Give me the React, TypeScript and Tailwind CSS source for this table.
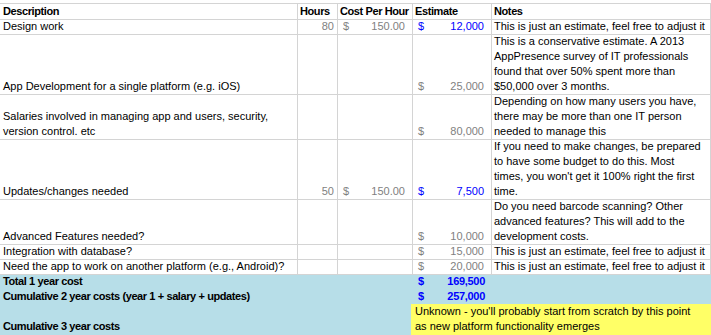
import React from "react";

type Money = { v: string; blue?: boolean; bold?: boolean };

interface Row {
  h: number;
  desc: string[];
  hours?: string;
  rate?: string;
  est?: Money;
  notes: string[];
}

const ROWS: Row[] = [
  {
    h: 15,
    desc: ["Design work"],
    hours: "80",
    rate: "150.00",
    est: { v: "12,000", blue: true },
    notes: ["This is just an estimate, feel free to adjust it"],
  },
  {
    h: 60,
    desc: ["App Development for a single platform (e.g. iOS)"],
    est: { v: "25,000" },
    notes: [
      "This is a conservative estimate. A 2013",
      "AppPresence survey of IT professionals",
      "found that over 50% spent more than",
      "$50,000 over 3 months.",
    ],
  },
  {
    h: 45,
    desc: ["Salaries involved in managing app and users, security,", "version control. etc"],
    est: { v: "80,000" },
    notes: [
      "Depending on how many users you have,",
      "there may be more than one IT person",
      "needed to manage this",
    ],
  },
  {
    h: 60,
    desc: ["Updates/changes needed"],
    hours: "50",
    rate: "150.00",
    est: { v: "7,500", blue: true },
    notes: [
      "If you need to make changes, be prepared",
      "to have some budget to do this. Most",
      "times, you won't get it 100% right the first",
      "time.",
    ],
  },
  {
    h: 45,
    desc: ["Advanced Features needed?"],
    est: { v: "10,000" },
    notes: [
      "Do you need barcode scanning? Other",
      "advanced features? This will add to the",
      "development costs.",
    ],
  },
  {
    h: 15,
    desc: ["Integration with database?"],
    est: { v: "15,000" },
    notes: ["This is just an estimate, feel free to adjust it"],
  },
  {
    h: 15,
    desc: ["Need the app to work on another platform (e.g., Android)?"],
    est: { v: "20,000" },
    notes: ["This is just an estimate, feel free to adjust it"],
  },
];

const COLS = "grid grid-cols-[298px_40px_75px_79px_219px]";
const CELL = "flex flex-col justify-end border-r border-b border-[#d4d4d4] leading-[15px] overflow-visible";

function Lines({ lines }: { lines: string[] }) {
  return (
    <>
      {lines.map((l) => (
        <span key={l} className="block whitespace-nowrap">
          {l}
        </span>
      ))}
    </>
  );
}

function MoneyCell({ m, className = "" }: { m?: Money; className?: string }) {
  if (!m) return <div className={className} />;
  const color = m.blue ? "text-[#0000ff]" : "text-[#7f7f7f]";
  return (
    <div className={`${className} ${color} ${m.bold ? "font-bold tracking-[-0.3px]" : ""}`}>
      <div className="flex justify-between pl-[5px] pr-[7px] whitespace-nowrap">
        <span>$</span>
        <span>{m.v}</span>
      </div>
    </div>
  );
}

export default function App() {
  return (
    <div className="w-[711px] h-[335px] overflow-hidden bg-white text-black font-['Liberation_Sans',Arial,sans-serif] text-[11px]">
      <div className="mt-[3px] border-t border-[#d4d4d4]">
        <div className={`${COLS} h-[15px] font-bold tracking-[-0.4px]`}>
          <div className={`${CELL} pl-[3px]`}>Description</div>
          <div className={`${CELL} pl-[2px]`}>Hours</div>
          <div className={`${CELL} pl-[2px] whitespace-nowrap`}>Cost Per Hour</div>
          <div className={`${CELL} pl-[2px]`}>Estimate</div>
          <div className={`${CELL} pl-[2px]`}>Notes</div>
        </div>

        {ROWS.map((r, i) => (
          <div key={i} className={COLS} style={{ height: r.h }}>
            <div className={`${CELL} pl-[3px]`}>
              <Lines lines={r.desc} />
            </div>
            <div className={`${CELL} items-end pr-[3px] text-[#7f7f7f]`}>{r.hours}</div>
            <div className={`${CELL} text-[#7f7f7f]`}>
              {r.rate && (
                <div className="flex justify-between pl-[5px] pr-[7px]">
                  <span>$</span>
                  <span>{r.rate}</span>
                </div>
              )}
            </div>
            <MoneyCell m={r.est} className={CELL} />
            <div className={`${CELL} justify-start pl-[2px]`}>
              <Lines lines={r.notes} />
            </div>
          </div>
        ))}

        <div className="bg-[#b7dee8] font-bold">
          <div className={`${COLS} h-[15px]`}>
            <div className="col-span-3 pl-[3px] leading-[15px] flex items-end tracking-[-0.4px]">Total 1 year cost</div>
            <MoneyCell m={{ v: "169,500", blue: true, bold: true }} className="flex flex-col justify-end leading-[15px]" />
            <div />
          </div>
          <div className={`${COLS} h-[15px]`}>
            <div className="col-span-3 pl-[3px] leading-[15px] flex items-end whitespace-nowrap tracking-[-0.4px]">
              Cumulative 2 year costs (year 1 + salary + updates)
            </div>
            <MoneyCell m={{ v: "257,000", blue: true, bold: true }} className="flex flex-col justify-end leading-[15px]" />
            <div />
          </div>
          <div className={`${COLS} h-[32px]`}>
            <div className="col-span-3 pl-[3px] leading-[15px] flex items-end pb-[2px] tracking-[-0.4px]">Cumulative 3 year costs</div>
            <div className="col-span-2 -ml-[2px] bg-[#ffff66] pl-[4px] font-normal leading-[15px]">
              <Lines
                lines={[
                  "Unknown - you'll probably start from scratch by this point",
                  "as new platform functionality emerges",
                ]}
              />
            </div>
          </div>
        </div>
      </div>
    </div>
  );
}
